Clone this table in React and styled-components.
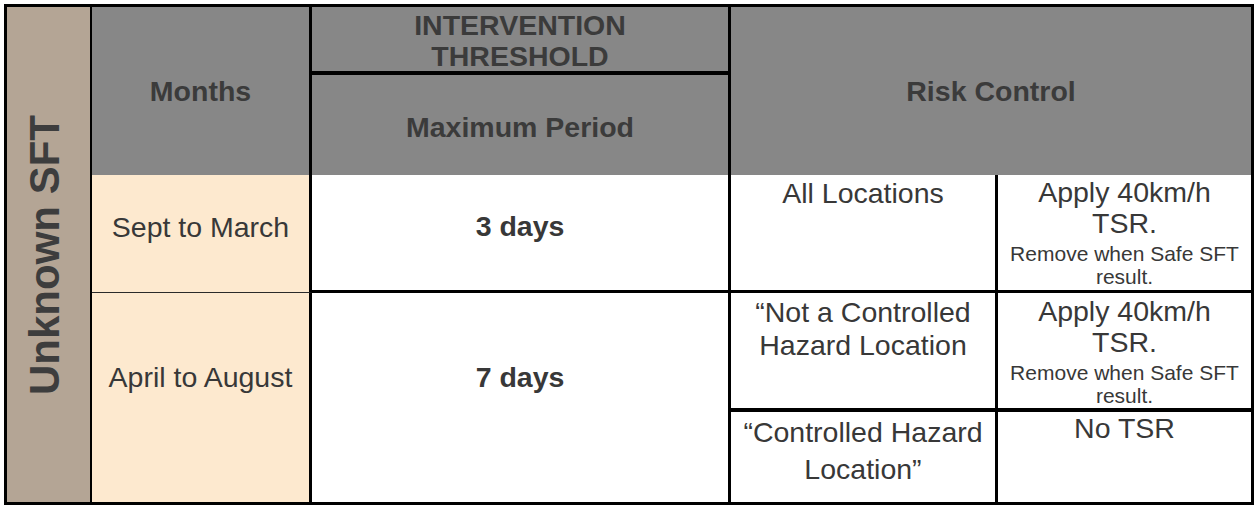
import React from 'react';
import styled, { createGlobalStyle } from 'styled-components';

const GlobalStyle = createGlobalStyle`
  html, body {
    margin: 0;
    padding: 0;
    background: #fff;
  }
  body {
    font-family: "Liberation Sans", Arial, sans-serif;
    color: #3d3d3d;
  }
`;

const tones = {
  side: '#b4a595',
  head: '#878787',
  month: '#fde9cf',
  plain: '#fff',
};

const Page = styled.div`
  padding: 4px;
`;

const Table = styled.div`
  display: grid;
  box-sizing: border-box;
  width: 1250px;
  height: 501px;
  border: 3px solid #000;
  grid-template-columns: 85px 220px 419px 267px 253px;
  grid-template-rows: 68px 100px 118px 119px 90px;
`;

const Cell = styled.div`
  box-sizing: border-box;
  display: flex;
  flex-direction: column;
  align-items: center;
  justify-content: ${p => (p.$top ? 'flex-start' : 'center')};
  text-align: center;
  grid-column: ${p => p.$col};
  grid-row: ${p => p.$row};
  background: ${p => tones[p.$tone || 'plain']};
  border-right: ${p => p.$right || 0}px solid #000;
  border-bottom: ${p => p.$bottom || 0}px solid ${p => (p.$thin ? '#2a2a2a' : '#000')};
  padding: ${p => p.$pad || '0'};
`;

const SideLabel = styled.span`
  writing-mode: vertical-rl;
  transform: rotate(180deg);
  font-size: 42px;
  font-weight: 700;
  line-height: 1;
  white-space: nowrap;
  color: #3d3d3d;
`;

const HeadText = styled.div`
  font-size: 28.5px;
  font-weight: 700;
  line-height: 31px;
  color: #3b3b3b;
`;

const BodyText = styled.div`
  font-size: 28.5px;
  font-weight: ${p => (p.$bold ? 700 : 400)};
  line-height: ${p => p.$lh || 31}px;
  color: #383838;
`;

const Note = styled.div`
  font-size: 21px;
  line-height: 23px;
  margin-top: 3px;
  color: #383838;
`;

const Action = () => (
  <>
    <BodyText>Apply 40km/h<br />TSR.</BodyText>
    <Note>Remove when Safe SFT<br />result.</Note>
  </>
);

export default function App() {
  return (
    <Page>
      <GlobalStyle />
      <Table>
        <Cell $col="1" $row="1 / 6" $tone="side" $right={2} $pad="0 8px 0 0">
          <SideLabel>Unknown SFT</SideLabel>
        </Cell>

        <Cell $col="2" $row="1 / 3" $tone="head" $right={3}>
          <HeadText>Months</HeadText>
        </Cell>
        <Cell $col="3" $row="1" $tone="head" $right={3} $bottom={4} $pad="3px 0 0">
          <HeadText>INTERVENTION<br />THRESHOLD</HeadText>
        </Cell>
        <Cell $col="3" $row="2" $tone="head" $right={3} $pad="4px 0 0">
          <HeadText>Maximum Period</HeadText>
        </Cell>
        <Cell $col="4 / 6" $row="1 / 3" $tone="head">
          <HeadText>Risk Control</HeadText>
        </Cell>

        <Cell $col="2" $row="3" $tone="month" $right={3} $bottom={1} $thin $pad="0 0 13px">
          <BodyText>Sept to March</BodyText>
        </Cell>
        <Cell $col="3" $row="3" $right={3} $bottom={3} $pad="0 0 13px">
          <BodyText $bold>3 days</BodyText>
        </Cell>
        <Cell $col="4" $row="3" $right={3} $bottom={3} $top $pad="3px 0 0">
          <BodyText>All Locations</BodyText>
        </Cell>
        <Cell $col="5" $row="3" $bottom={3} $top $pad="2px 0 0">
          <Action />
        </Cell>

        <Cell $col="2" $row="4 / 6" $tone="month" $right={3} $pad="0 0 40px">
          <BodyText>April to August</BodyText>
        </Cell>
        <Cell $col="3" $row="4 / 6" $right={3} $pad="0 0 40px">
          <BodyText $bold>7 days</BodyText>
        </Cell>
        <Cell $col="4" $row="4" $right={3} $bottom={4} $top $pad="3px 0 0">
          <BodyText $lh={33}>“Not a Controlled<br />Hazard Location</BodyText>
        </Cell>
        <Cell $col="5" $row="4" $bottom={4} $top $pad="3px 0 0">
          <Action />
        </Cell>
        <Cell $col="4" $row="5" $right={3} $top $pad="2px 0 0">
          <BodyText $lh={37}>“Controlled Hazard<br />Location”</BodyText>
        </Cell>
        <Cell $col="5" $row="5" $top $pad="1px 0 0">
          <BodyText>No TSR</BodyText>
        </Cell>
      </Table>
    </Page>
  );
}
